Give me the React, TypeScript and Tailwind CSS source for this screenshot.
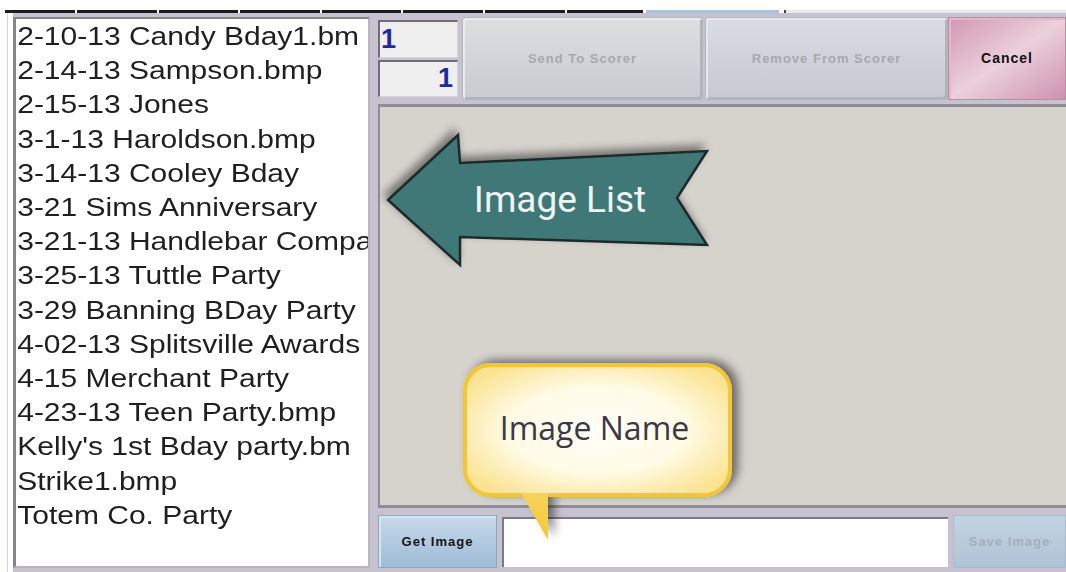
import React from 'react';

// names as the list control shows them (long names are clipped by the box)
const files = [
  '2-10-13 Candy Bday1.bm',
  '2-14-13 Sampson.bmp',
  '2-15-13 Jones',
  '3-1-13 Haroldson.bmp',
  '3-14-13 Cooley Bday',
  '3-21 Sims Anniversary',
  '3-21-13 Handlebar Compa',
  '3-25-13 Tuttle Party',
  '3-29 Banning BDay Party',
  '4-02-13 Splitsville Awards',
  '4-15 Merchant Party',
  '4-23-13 Teen Party.bmp',
  "Kelly's 1st Bday party.bm",
  'Strike1.bmp',
  'Totem Co. Party',
];

// widths of the dark tab strip along the top edge
const tabs = [70, 80, 79, 80, 79, 80, 80, 76];

function ArrowNote() {
  return (
    <>
      <svg className="absolute left-[375px] top-[120px] overflow-visible" width="345" height="160" viewBox="0 0 345 160">
        <defs>
          <filter id="arrowShadow" x="-20%" y="-30%" width="140%" height="160%">
            <feDropShadow dx="-3" dy="-5" stdDeviation="4" floodColor="#000" floodOpacity="0.45" />
          </filter>
        </defs>
        <polygon
          points="13,80 83,15 85,43 332,31 302,78 332,125 85,117 85,145"
          fill="#3f7878"
          stroke="#1e2a2a"
          strokeWidth="2.5"
          strokeLinejoin="miter"
          filter="url(#arrowShadow)"
        />
      </svg>
      <div className="absolute left-[460px] top-[181px] w-[200px] text-center font-['Roboto'] text-[37px] leading-[37px] text-[#eef4f4]">
        Image List
      </div>
    </>
  );
}

function CalloutNote() {
  return (
    <>
      <svg className="absolute left-[455px] top-[350px] overflow-visible" width="300" height="200" viewBox="0 0 300 200">
        <defs>
          <radialGradient id="calloutFill" cx="50%" cy="50%" r="60%">
            <stop offset="0%" stopColor="#fffef8" />
            <stop offset="55%" stopColor="#fffbe6" />
            <stop offset="100%" stopColor="#fbe391" />
          </radialGradient>
          <linearGradient id="tailFill" x1="0" y1="0" x2="0" y2="1">
            <stop offset="0%" stopColor="#f6d35a" />
            <stop offset="100%" stopColor="#f2c73a" />
          </linearGradient>
          <filter id="calloutShadow" x="-20%" y="-30%" width="140%" height="160%">
            <feDropShadow dx="6" dy="-3" stdDeviation="5" floodColor="#000" floodOpacity="0.5" />
          </filter>
        </defs>
        <g filter="url(#calloutShadow)">
          <path
            d="M36,15 H249 A26,26 0 0 1 275,41 V119 A26,26 0 0 1 249,145 H36 A26,26 0 0 1 10,119 V41 A26,26 0 0 1 36,15 Z"
            fill="url(#calloutFill)"
            stroke="#f3c637"
            strokeWidth="4"
          />
          <polygon points="66,143 93,143 93,190" fill="url(#tailFill)" />
        </g>
      </svg>
      <div className="absolute left-[462px] top-[412px] w-[265px] text-center font-['Open_Sans'] text-[32px] leading-[32px] text-[#3a3944]">
        Image Name
      </div>
    </>
  );
}

export default function App() {
  return (
    <div className="relative w-[1066px] h-[572px] overflow-hidden bg-white font-['Liberation_Sans',Arial,sans-serif]">
      <div className="h-[10px]" />
      <div className="flex h-[3px]">
        <div className="w-[5px]" />
        <div className="flex gap-[2px]">
          {tabs.map((w, i) => (
            <div key={i} className="h-full bg-[#1c1c1e]" style={{ width: w }} />
          ))}
        </div>
        <div className="ml-[3px] w-[133px] bg-[#a9c3de]" />
        <div className="ml-[5px] w-[2px] bg-[#444]" />
        <div className="flex-1 bg-[#ebe9ec]" />
      </div>

      <div className="flex h-[559px]">
        <div className="w-[13px] bg-white flex">
          <div className="ml-[7px] w-px bg-[#d4d2d8]" />
        </div>
        <div className="flex flex-1 gap-[8px] bg-[#c6c2d0] pt-[4px]">
          {/* file list */}
          <div className="w-[357px] h-[551px] overflow-hidden bg-white border-2 border-l-[3px] border-[#85858d] border-r-[#b7b5be] border-b-[#b7b5be]">
            <div className="origin-top-left scale-x-[1.2] whitespace-nowrap pl-px text-[25px] leading-[34.2px] text-[#1f1f1f]">
              {files.map(f => (
                <div key={f}>{f}</div>
              ))}
            </div>
          </div>

          {/* scorer side */}
          <div className="flex w-[688px] flex-col">
            <div className="flex h-[83px]">
              <div className="flex w-[80px] flex-col gap-[2px] py-[3px]">
                <div className="h-[38px] bg-[#efeff0] border-t-2 border-l-2 border-[#6f6e76] border-r border-b border-r-[#d6d4dc] border-b-[#d6d4dc] pl-px pt-[4px] text-[27px] font-bold leading-[27px] text-[#1c2b9e]">
                  1
                </div>
                <div className="h-[38px] bg-[#efeff0] border-t-2 border-l-2 border-[#6f6e76] border-r border-b border-r-[#d6d4dc] border-b-[#d6d4dc] pr-[4px] pt-[3px] text-right text-[27px] font-bold leading-[27px] text-[#1c2b9e]">
                  1
                </div>
              </div>
              <button className="ml-[4px] w-[241px] rounded-[3px] border border-[#b3b6bc] bg-linear-to-b from-[#dddee2] to-[#c8cbd0] shadow-[inset_2px_2px_0_#e9eaee,inset_-2px_-2px_0_#b1b4ba] text-[13px] font-bold tracking-[1px] text-[#a6a8ad]">
                Send To Scorer
              </button>
              <button className="ml-[2px] w-[243px] rounded-[3px] border border-[#b3b6bc] bg-linear-to-b from-[#d9dce1] to-[#c6cad0] shadow-[inset_2px_2px_0_#e6e8ec,inset_-2px_-2px_0_#b1b4ba] text-[13px] font-bold tracking-[1px] text-[#a6a8ad]">
                Remove From Scorer
              </button>
              <button className="w-[118px] border border-[#c08aa2] bg-linear-to-br from-[#d197b2] via-[#ebd0dd] to-[#cc93ae] shadow-[inset_2px_2px_0_#e2b9cb] text-[14px] font-bold tracking-[1px] text-[#111]">
                Cancel
              </button>
            </div>

            {/* picture area */}
            <div className="mt-[4px] h-[404px] bg-[#d6d2cc] border-t-[3px] border-l-2 border-b-[3px] border-[#8e8c96]" />

            <div className="mt-[7px] flex h-[53px] gap-[5px]">
              <button className="w-[119px] border border-[#8ea8c2] bg-linear-to-b from-[#c7d9eb] to-[#9fbbd6] shadow-[inset_2px_2px_0_#d6e4f2] text-[13px] font-bold tracking-[1px] text-[#161616]">
                Get Image
              </button>
              <div className="mt-[2px] mb-px w-[446px] bg-white border-t-2 border-l-2 border-[#7c7a84]" />
              <button className="w-[113px] border border-[#a9bccf] bg-linear-to-b from-[#c4d3e1] to-[#afc3d6] text-[13px] font-bold tracking-[1px] text-[#a3afbb]">
                Save Image
              </button>
            </div>
          </div>
        </div>
      </div>

      <ArrowNote />
      <CalloutNote />
    </div>
  );
}
